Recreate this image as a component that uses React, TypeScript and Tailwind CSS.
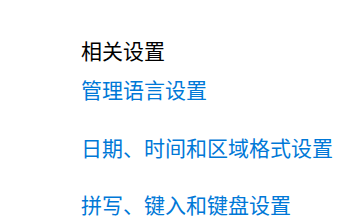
export default function App() {
  return (
    <div
      className="w-[339px] h-[220px] bg-white overflow-hidden pl-[81px] pt-[40px]"
      style={{ fontFamily: '"Noto Sans CJK SC", "Microsoft YaHei", sans-serif' }}
    >
      <div className="text-[21px] leading-[21px] text-black">相关设置</div>
      <div className="flex flex-col gap-[36.5px] mt-[18px] text-[#0078d7] text-[21px] leading-[21px]">
        <a>管理语言设置</a>
        <a>日期、时间和区域格式设置</a>
        <a>拼写、键入和键盘设置</a>
      </div>
    </div>
  );
}
